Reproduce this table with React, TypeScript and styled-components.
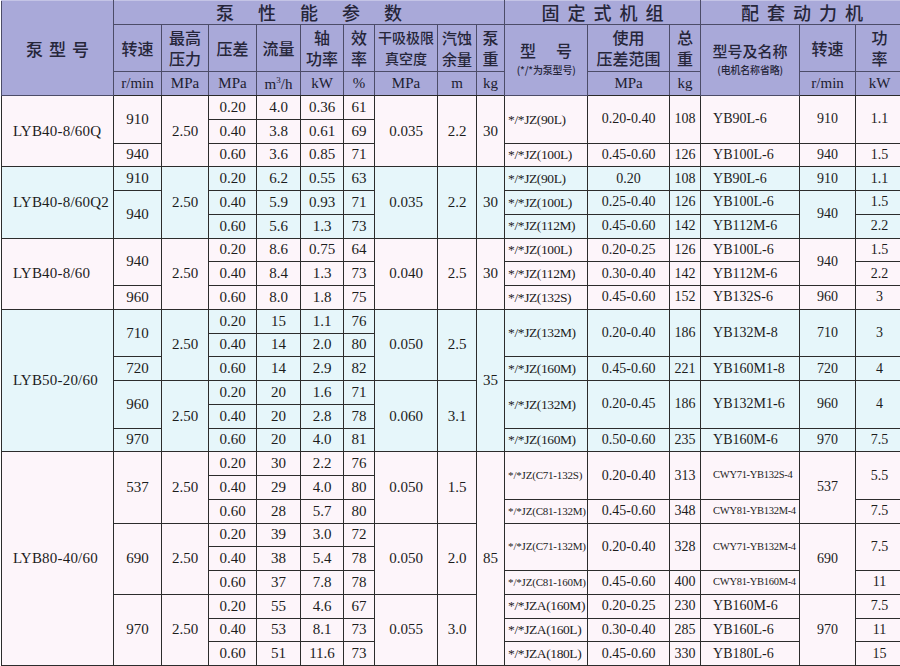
import React from 'react';
import styled, { createGlobalStyle } from 'styled-components';

type Kind = 'pump' | 'num' | 'rnum' | 'model' | 'modelS' | 'motor' | 'motorS';
type Cell = { t: string; rs: number; k: Kind };
type Tone = 'pink' | 'cyan';
type Row = { tone: Tone; cells: Cell[] };

const c = (t: string, rs = 1, k: Kind = 'num'): Cell => ({ t, rs, k });
const perf = (...vals: string[]): Cell[] => vals.map((v) => c(v));

const rows: Row[] = [
  // LYB40-8/60Q
  {
    tone: 'pink',
    cells: [
      c('LYB40-8/60Q', 3, 'pump'), c('910', 2), c('2.50', 3), ...perf('0.20', '4.0', '0.36', '61'),
      c('0.035', 3), c('2.2', 3), c('30', 3),
      c('*/*JZ(90L)', 2, 'model'), c('0.20-0.40', 2, 'rnum'), c('108', 2, 'rnum'),
      c('YB90L-6', 2, 'motor'), c('910', 2, 'rnum'), c('1.1', 2, 'rnum'),
    ],
  },
  { tone: 'pink', cells: perf('0.40', '3.8', '0.61', '69') },
  {
    tone: 'pink',
    cells: [
      c('940'), ...perf('0.60', '3.6', '0.85', '71'),
      c('*/*JZ(100L)', 1, 'model'), c('0.45-0.60', 1, 'rnum'), c('126', 1, 'rnum'),
      c('YB100L-6', 1, 'motor'), c('940', 1, 'rnum'), c('1.5', 1, 'rnum'),
    ],
  },
  // LYB40-8/60Q2
  {
    tone: 'cyan',
    cells: [
      c('LYB40-8/60Q2', 3, 'pump'), c('910'), c('2.50', 3), ...perf('0.20', '6.2', '0.55', '63'),
      c('0.035', 3), c('2.2', 3), c('30', 3),
      c('*/*JZ(90L)', 1, 'model'), c('0.20', 1, 'rnum'), c('108', 1, 'rnum'),
      c('YB90L-6', 1, 'motor'), c('910', 1, 'rnum'), c('1.1', 1, 'rnum'),
    ],
  },
  {
    tone: 'cyan',
    cells: [
      c('940', 2), ...perf('0.40', '5.9', '0.93', '71'),
      c('*/*JZ(100L)', 1, 'model'), c('0.25-0.40', 1, 'rnum'), c('126', 1, 'rnum'),
      c('YB100L-6', 1, 'motor'), c('940', 2, 'rnum'), c('1.5', 1, 'rnum'),
    ],
  },
  {
    tone: 'cyan',
    cells: [
      ...perf('0.60', '5.6', '1.3', '73'),
      c('*/*JZ(112M)', 1, 'model'), c('0.45-0.60', 1, 'rnum'), c('142', 1, 'rnum'),
      c('YB112M-6', 1, 'motor'), c('2.2', 1, 'rnum'),
    ],
  },
  // LYB40-8/60
  {
    tone: 'pink',
    cells: [
      c('LYB40-8/60', 3, 'pump'), c('940', 2), c('2.50', 3), ...perf('0.20', '8.6', '0.75', '64'),
      c('0.040', 3), c('2.5', 3), c('30', 3),
      c('*/*JZ(100L)', 1, 'model'), c('0.20-0.25', 1, 'rnum'), c('126', 1, 'rnum'),
      c('YB100L-6', 1, 'motor'), c('940', 2, 'rnum'), c('1.5', 1, 'rnum'),
    ],
  },
  {
    tone: 'pink',
    cells: [
      ...perf('0.40', '8.4', '1.3', '73'),
      c('*/*JZ(112M)', 1, 'model'), c('0.30-0.40', 1, 'rnum'), c('142', 1, 'rnum'),
      c('YB112M-6', 1, 'motor'), c('2.2', 1, 'rnum'),
    ],
  },
  {
    tone: 'pink',
    cells: [
      c('960'), ...perf('0.60', '8.0', '1.8', '75'),
      c('*/*JZ(132S)', 1, 'model'), c('0.45-0.60', 1, 'rnum'), c('152', 1, 'rnum'),
      c('YB132S-6', 1, 'motor'), c('960', 1, 'rnum'), c('3', 1, 'rnum'),
    ],
  },
  // LYB50-20/60
  {
    tone: 'cyan',
    cells: [
      c('LYB50-20/60', 6, 'pump'), c('710', 2), c('2.50', 3), ...perf('0.20', '15', '1.1', '76'),
      c('0.050', 3), c('2.5', 3), c('35', 6),
      c('*/*JZ(132M)', 2, 'model'), c('0.20-0.40', 2, 'rnum'), c('186', 2, 'rnum'),
      c('YB132M-8', 2, 'motor'), c('710', 2, 'rnum'), c('3', 2, 'rnum'),
    ],
  },
  { tone: 'cyan', cells: perf('0.40', '14', '2.0', '80') },
  {
    tone: 'cyan',
    cells: [
      c('720'), ...perf('0.60', '14', '2.9', '82'),
      c('*/*JZ(160M)', 1, 'model'), c('0.45-0.60', 1, 'rnum'), c('221', 1, 'rnum'),
      c('YB160M1-8', 1, 'motor'), c('720', 1, 'rnum'), c('4', 1, 'rnum'),
    ],
  },
  {
    tone: 'cyan',
    cells: [
      c('960', 2), c('2.50', 3), ...perf('0.20', '20', '1.6', '71'),
      c('0.060', 3), c('3.1', 3),
      c('*/*JZ(132M)', 2, 'model'), c('0.20-0.45', 2, 'rnum'), c('186', 2, 'rnum'),
      c('YB132M1-6', 2, 'motor'), c('960', 2, 'rnum'), c('4', 2, 'rnum'),
    ],
  },
  { tone: 'cyan', cells: perf('0.40', '20', '2.8', '78') },
  {
    tone: 'cyan',
    cells: [
      c('970'), ...perf('0.60', '20', '4.0', '81'),
      c('*/*JZ(160M)', 1, 'model'), c('0.50-0.60', 1, 'rnum'), c('235', 1, 'rnum'),
      c('YB160M-6', 1, 'motor'), c('970', 1, 'rnum'), c('7.5', 1, 'rnum'),
    ],
  },
  // LYB80-40/60
  {
    tone: 'pink',
    cells: [
      c('LYB80-40/60', 9, 'pump'), c('537', 3), c('2.50', 3), ...perf('0.20', '30', '2.2', '76'),
      c('0.050', 3), c('1.5', 3), c('85', 9),
      c('*/*JZ(C71-132S)', 2, 'modelS'), c('0.20-0.40', 2, 'rnum'), c('313', 2, 'rnum'),
      c('CWY71-YB132S-4', 2, 'motorS'), c('537', 3, 'rnum'), c('5.5', 2, 'rnum'),
    ],
  },
  { tone: 'pink', cells: perf('0.40', '29', '4.0', '80') },
  {
    tone: 'pink',
    cells: [
      ...perf('0.60', '28', '5.7', '80'),
      c('*/*JZ(C81-132M)', 1, 'modelS'), c('0.45-0.60', 1, 'rnum'), c('348', 1, 'rnum'),
      c('CWY81-YB132M-4', 1, 'motorS'), c('7.5', 1, 'rnum'),
    ],
  },
  {
    tone: 'pink',
    cells: [
      c('690', 3), c('2.50', 3), ...perf('0.20', '39', '3.0', '72'),
      c('0.050', 3), c('2.0', 3),
      c('*/*JZ(C71-132M)', 2, 'modelS'), c('0.20-0.40', 2, 'rnum'), c('328', 2, 'rnum'),
      c('CWY71-YB132M-4', 2, 'motorS'), c('690', 3, 'rnum'), c('7.5', 2, 'rnum'),
    ],
  },
  { tone: 'pink', cells: perf('0.40', '38', '5.4', '78') },
  {
    tone: 'pink',
    cells: [
      ...perf('0.60', '37', '7.8', '78'),
      c('*/*JZ(C81-160M)', 1, 'modelS'), c('0.45-0.60', 1, 'rnum'), c('400', 1, 'rnum'),
      c('CWY81-YB160M-4', 1, 'motorS'), c('11', 1, 'rnum'),
    ],
  },
  {
    tone: 'pink',
    cells: [
      c('970', 3), c('2.50', 3), ...perf('0.20', '55', '4.6', '67'),
      c('0.055', 3), c('3.0', 3),
      c('*/*JZA(160M)', 1, 'model'), c('0.20-0.25', 1, 'rnum'), c('230', 1, 'rnum'),
      c('YB160M-6', 1, 'motor'), c('970', 3, 'rnum'), c('7.5', 1, 'rnum'),
    ],
  },
  {
    tone: 'pink',
    cells: [
      ...perf('0.40', '53', '8.1', '73'),
      c('*/*JZA(160L)', 1, 'model'), c('0.30-0.40', 1, 'rnum'), c('285', 1, 'rnum'),
      c('YB160L-6', 1, 'motor'), c('11', 1, 'rnum'),
    ],
  },
  {
    tone: 'pink',
    cells: [
      ...perf('0.60', '51', '11.6', '73'),
      c('*/*JZA(180L)', 1, 'model'), c('0.45-0.60', 1, 'rnum'), c('330', 1, 'rnum'),
      c('YB180L-6', 1, 'motor'), c('15', 1, 'rnum'),
    ],
  },
];

const colWidths = [112, 48, 47, 48, 44, 43, 31, 63, 39, 28, 83, 82, 31, 99, 56, 48];

const App: React.FC = () => (
  <>
    <GlobalStyle />
    <Page>
      <Sheet>
        <colgroup>
          {colWidths.map((w, i) => (
            <col key={i} style={{ width: w }} />
          ))}
        </colgroup>
        <thead>
          <HeadRow $h={24}>
            <HeadCell rowSpan={3} $size={17} $top>
              <Spaced $gap={6}>泵型号</Spaced>
            </HeadCell>
            <HeadCell colSpan={9} $size={18} $top>
              <Spaced $gap={24}>泵性能参数</Spaced>
            </HeadCell>
            <HeadCell colSpan={3} $size={18} $top>
              <Spaced $gap={8}>固定式机组</Spaced>
            </HeadCell>
            <HeadCell colSpan={3} $size={18} $top>
              <Spaced $gap={8}>配套动力机</Spaced>
            </HeadCell>
          </HeadRow>
          <HeadRow $h={47}>
            <HeadCell $size={16}>转速</HeadCell>
            <HeadCell $size={16}>最高<br />压力</HeadCell>
            <HeadCell $size={16}>压差</HeadCell>
            <HeadCell $size={16}>流量</HeadCell>
            <HeadCell $size={16}>轴<br />功率</HeadCell>
            <HeadCell $size={16}>效<br />率</HeadCell>
            <HeadCell $size={14}>干吸极限<br />真空度</HeadCell>
            <HeadCell $size={15}>汽蚀<br />余量</HeadCell>
            <HeadCell $size={16}>泵<br />重</HeadCell>
            <HeadCell rowSpan={2} $size={16}>
              <Stack>
                <Spaced $gap={20}>型号</Spaced>
                <Note>(*/*为泵型号)</Note>
              </Stack>
            </HeadCell>
            <HeadCell $size={16}>使用<br />压差范围</HeadCell>
            <HeadCell $size={16}>总<br />重</HeadCell>
            <HeadCell rowSpan={2} $size={15}>
              <Stack>
                <span>型号及名称</span>
                <Note>(电机名称省略)</Note>
              </Stack>
            </HeadCell>
            <HeadCell $size={16}>转速</HeadCell>
            <HeadCell $size={16}>功<br />率</HeadCell>
          </HeadRow>
          <HeadRow $h={24}>
            <UnitCell>r/min</UnitCell>
            <UnitCell>MPa</UnitCell>
            <UnitCell>MPa</UnitCell>
            <UnitCell>
              m<sup>3</sup>/h
            </UnitCell>
            <UnitCell>kW</UnitCell>
            <UnitCell>%</UnitCell>
            <UnitCell>MPa</UnitCell>
            <UnitCell>m</UnitCell>
            <UnitCell>kg</UnitCell>
            <UnitCell>MPa</UnitCell>
            <UnitCell>kg</UnitCell>
            <UnitCell>r/min</UnitCell>
            <UnitCell>kW</UnitCell>
          </HeadRow>
        </thead>
        <tbody>
          {rows.map((row, i) => (
            <DataRow key={i} $tone={row.tone}>
              {row.cells.map((cell, j) => (
                <Td key={j} rowSpan={cell.rs} $kind={cell.k}>
                  {cell.t}
                </Td>
              ))}
            </DataRow>
          ))}
        </tbody>
      </Sheet>
    </Page>
  </>
);

const GlobalStyle = createGlobalStyle`
  html, body {
    margin: 0;
    padding: 0;
    background: #ffffff;
    overflow: hidden;
  }
`;

const Page = styled.div`
  width: 900px;
  height: 666px;
  overflow: hidden;
  padding-left: 1px;
  box-sizing: border-box;
`;

const Sheet = styled.table`
  table-layout: fixed;
  width: 902px;
  border-collapse: collapse;
  font-family: 'Liberation Serif', 'Noto Sans CJK SC', serif;
  color: #1c1c1c;
`;

const HeadRow = styled.tr<{ $h: number }>`
  height: ${(p) => p.$h}px;
`;

const HeadCell = styled.th<{ $size: number; $top?: boolean }>`
  background: #a9a9d9;
  border: 1px solid #4c4c68;
  border-top-color: ${(p) => (p.$top ? '#c4c4e6' : '#4c4c68')};
  padding: 0;
  font-family: 'Noto Sans CJK SC', 'Liberation Serif', sans-serif;
  font-weight: 500;
  font-size: ${(p) => p.$size}px;
  line-height: 21px;
  color: #26263a;
  text-align: center;
  vertical-align: middle;
  white-space: nowrap;
`;

const Spaced = styled.span<{ $gap: number }>`
  letter-spacing: ${(p) => p.$gap}px;
  margin-right: -${(p) => p.$gap}px;
`;

const Stack = styled.div`
  display: flex;
  flex-direction: column;
  align-items: center;
  gap: 3px;
  margin-top: -4px;
`;

const Note = styled.span`
  font-size: 10px;
  line-height: 12px;
  letter-spacing: -0.2px;
`;

const UnitCell = styled.th`
  background: #a9a9d9;
  border: 1px solid #4c4c68;
  border-bottom: 1px solid #2a2a2a;
  padding: 0;
  font-family: 'Liberation Serif', serif;
  font-weight: 400;
  font-size: 15px;
  line-height: 1;
  color: #202030;
  text-align: center;
  white-space: nowrap;

  sup {
    font-size: 9px;
    vertical-align: 6px;
  }
`;

const DataRow = styled.tr<{ $tone: Tone }>`
  height: 23.75px;
  background: ${(p) => (p.$tone === 'pink' ? '#fdf5fa' : '#e6f6fa')};
`;

const kindStyles: Record<Kind, string> = {
  pump: 'text-align: left; padding-left: 11px; font-size: 15px; letter-spacing: 0.2px;',
  num: 'text-align: center; font-size: 15px;',
  rnum: 'text-align: center; font-size: 14px;',
  model: 'text-align: left; padding-left: 3px; font-size: 13.5px; letter-spacing: -0.4px;',
  modelS: 'text-align: left; padding-left: 3px; font-size: 11px; letter-spacing: -0.2px;',
  motor: 'text-align: left; padding-left: 12px; font-size: 14px;',
  motorS: 'text-align: left; padding-left: 12px; font-size: 10.5px; letter-spacing: -0.3px;',
};

const Td = styled.td<{ $kind: Kind }>`
  border: 1px solid #2c2c2c;
  padding: 0;
  line-height: 1;
  white-space: nowrap;
  vertical-align: middle;
  overflow: hidden;
  ${(p) => kindStyles[p.$kind]}
`;

export default App;
